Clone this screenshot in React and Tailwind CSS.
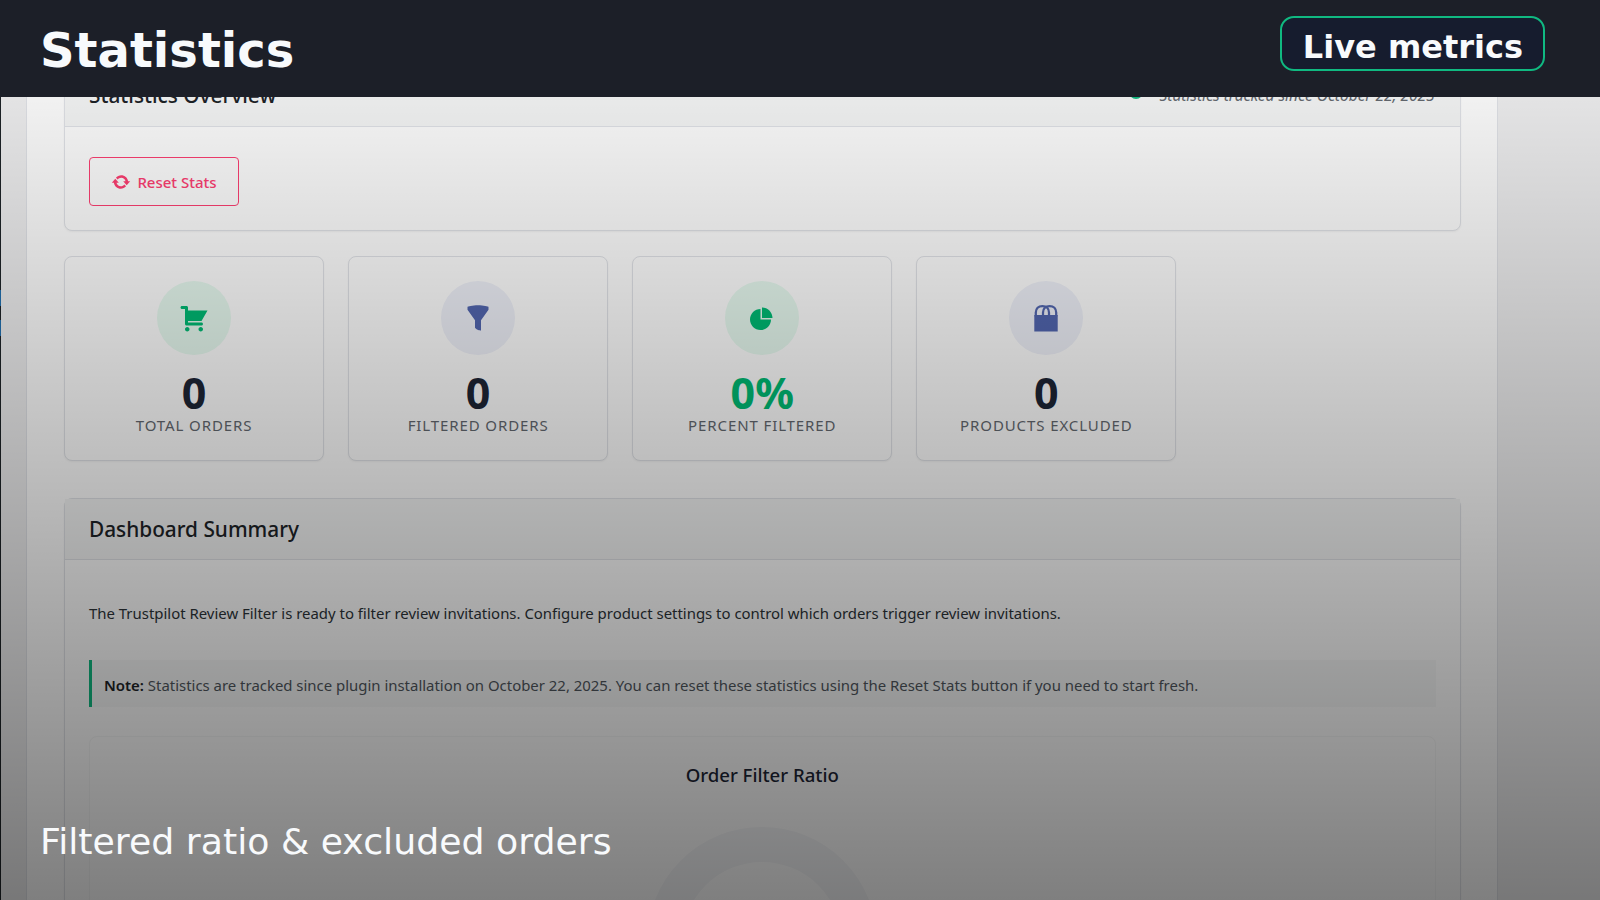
const stats = [
  { label: 'Total Orders', value: '0', icon: 'cart', tone: 'green' },
  { label: 'Filtered Orders', value: '0', icon: 'filter', tone: 'blue' },
  { label: 'Percent Filtered', value: '0%', icon: 'pie', tone: 'green', highlight: true },
  { label: 'Products Excluded', value: '0', icon: 'products', tone: 'blue' },
];

function StatIcon({ name }) {
  return (
    <svg viewBox="0 0 20 20" className="w-[30px] h-[30px] fill-current">
      {name === 'cart' && (
        <path d="M6 13h9c.55 0 1 .45 1 1s-.45 1-1 1H5c-.55 0-1-.45-1-1V4H2c-.55 0-1-.45-1-1s.45-1 1-1h3c.55 0 1 .45 1 1v2h13l-4 7H6v1zm-.5 3c.83 0 1.5.67 1.5 1.5S6.33 19 5.5 19 4 18.33 4 17.5 4.67 16 5.5 16zm9 0c.83 0 1.5.67 1.5 1.5s-.67 1.5-1.5 1.5-1.5-.67-1.5-1.5.67-1.5 1.5-1.5z" />
      )}
      {name === 'filter' && (
        <path d="M3 4.5v-2s3.34-1 7-1 7 1 7 1v2l-5 7.03v6.97s-1.22-.09-2.25-.59S8 16.5 8 16.5v-4.97z" />
      )}
      {name === 'pie' && (
        <path d="M10 10V3c3.87 0 7 3.13 7 7h-7zM9 4v7h7c0 3.87-3.13 7-7 7s-7-3.13-7-7 3.13-7 7-7z" />
      )}
      {name === 'products' && (
        <>
          <rect x="2.2" y="8" width="15.6" height="11" />
          <path
            d="M3.2 9V6.400C3.200 3.700 4.900 2 7.600 2s4.400 1.700 4.400 4.400V9M8 9V6.400C8 3.700 9.700 2 12.400 2s4.400 1.700 4.400 4.400V9"
            fill="none"
            stroke="currentColor"
            strokeWidth="1.5"
          />
        </>
      )}
    </svg>
  );
}

function StatCard({ stat }) {
  const green = stat.tone === 'green';
  return (
    <div className="h-[205px] bg-white border border-[#e2e4e9] rounded-lg shadow-xs flex flex-col items-center pt-6">
      <div className={`w-[74px] h-[74px] rounded-full flex items-center justify-center ${green ? 'bg-[#e8fbf1] text-[#00bb74]' : 'bg-[#f0f2fa] text-[#5266b0]'}`}>
        <StatIcon name={stat.icon} />
      </div>
      <div className={`mt-4 text-[43px] leading-[44px] font-bold ${stat.highlight ? 'text-[#00bb74]' : 'text-[#1d2535]'}`}>
        {stat.value}
      </div>
      <div className="text-[15px] leading-5 uppercase tracking-[0.9px] text-[#646970]">{stat.label}</div>
    </div>
  );
}

function App() {
  return (
    <div className="relative w-[1600px] h-[900px] overflow-hidden font-['Noto_Sans','Open_Sans',sans-serif] bg-[#f0f0f1] flex flex-col">
      {/* top bar */}
      <div className="relative z-20 h-[97px] shrink-0 bg-[#1c1f28] flex items-start justify-between pl-10 pr-[55px] font-['DejaVu_Sans',sans-serif]">
        <h1 className="mt-[18px] text-[48px] leading-[64px] font-bold text-[#f8fafc]">Statistics</h1>
        <div className="mt-4 h-[55px] pl-[21px] pr-[20px] pt-[7px] flex items-center rounded-[14px] border-2 border-[#10b981] bg-[#161c2e] text-[32px] font-bold text-[#f8fafc]">
          Live metrics
        </div>
      </div>

      {/* admin page, scrolled under the bar */}
      <div className="flex-1 min-h-0 overflow-hidden flex border-l border-[#1d2327]">
        <div className="ml-[25px] w-[1472px] -mt-[31px] shrink-0 self-start bg-white border-x border-[#e2e4e9] pl-[37px] pr-[36.500px]">
          <div className="bg-white border border-[#e2e4e9] rounded-lg shadow-xs">
            <div className="h-[60px] pb-[2px] bg-[#f6f7f7] border-b border-[#e2e4e9] flex items-center justify-between pl-6 pr-[25px]">
              <h2 className="text-[20.800px] font-medium text-[#1d2327]">Statistics Overview</h2>
              <div className="flex items-center gap-4">
                <span className="w-[14px] h-[14px] mb-[6px] rounded-full bg-[#10b981]" />
                <em className="text-[15.450px] text-[#646970]">Statistics tracked since October 22, 2025</em>
              </div>
            </div>
            <div className="px-6 pt-[30px] h-[103px]">
              <button className="w-[150px] h-[49px] pt-[2px] flex items-center justify-center gap-[6px] bg-transparent border border-[#ff4073] rounded text-[15px] font-medium text-[#ff4073]">
                <svg viewBox="0 0 20 20" className="w-5 h-5 -mt-[2px] fill-current">
                  <path d="M10.2 3.28c3.53 0 6.430 2.610 6.920 6h2.080l-3.500 4-3.500-4h2.320c-.45-1.970-2.210-3.450-4.320-3.450-1.450 0-2.730.71-3.540 1.780L4.950 5.660C6.230 4.200 8.110 3.280 10.200 3.280zm-.4 13.440c-3.520 0-6.430-2.610-6.920-6H.8l3.500-4c1.170 1.330 2.330 2.670 3.500 4H5.480c.45 1.970 2.210 3.450 4.320 3.450 1.450 0 2.730-.71 3.540-1.780l1.710 1.950c-1.280 1.460-3.150 2.380-5.250 2.380z" />
                </svg>
                Reset Stats
              </button>
            </div>
          </div>

          <div className="mt-[25px] grid grid-cols-5 gap-6">
            {stats.map((stat) => (
              <StatCard key={stat.label} stat={stat} />
            ))}
          </div>

          <div className="mt-[37px] bg-white border border-[#e2e4e9] rounded-lg shadow-xs h-[600px]">
            <div className="h-[61px] pt-[2px] bg-[#f6f7f7] border-b border-[#e2e4e9] flex items-center px-6">
              <h2 className="text-[20.800px] font-medium text-[#1d2327]">Dashboard Summary</h2>
            </div>
            <div className="px-6 pt-[43px]">
              <p className="text-[14.930px] leading-5 text-[#2c3338]">
                The Trustpilot Review Filter is ready to filter review invitations. Configure product settings to control which orders trigger review invitations.
              </p>
              <div className="mt-[37px] h-[47px] pt-1 flex items-center bg-[#f8f9f9] border-l-[3px] border-[#10b981] pl-3 text-[14.930px] text-[#50575e]">
                <p>
                  <strong className="font-semibold text-[#1d2327]">Note:</strong> Statistics are tracked since plugin installation on October 22, 2025. You can reset these statistics using the Reset Stats button if you need to start fresh.
                </p>
              </div>
              <div className="mt-[29px] border border-[#f6f7f7] rounded-lg flex flex-col items-center pt-6">
                <h3 className="text-[18.600px] font-medium leading-7 text-[#1d2535]">Order Filter Ratio</h3>
                <svg viewBox="0 0 230 230" className="mt-[38px] w-[230px] h-[230px]">
                  <circle cx="115" cy="115" r="97.5" fill="none" stroke="#f6f7f9" strokeWidth="35" />
                </svg>
              </div>
            </div>
          </div>
        </div>
      </div>

      {/* admin menu peeking at the left edge */}
      <div className="absolute left-0 top-[290px] w-px h-[16px] bg-[#2271b1]" />
      <div className="absolute left-0 top-[320px] w-px h-[16px] bg-[#2271b1]" />

      {/* darkening veil and caption */}
      <div className="absolute inset-0 z-10 bg-linear-to-b from-[rgba(0,0,0,0)] to-[rgba(0,0,0,0.5)]" />
      <div className="absolute left-10 top-[819px] z-20 font-['DejaVu_Sans',sans-serif] text-[36.250px] leading-[46px] text-[#f8fafc]">
        Filtered ratio &amp; excluded orders
      </div>
    </div>
  );
}

export default App;
